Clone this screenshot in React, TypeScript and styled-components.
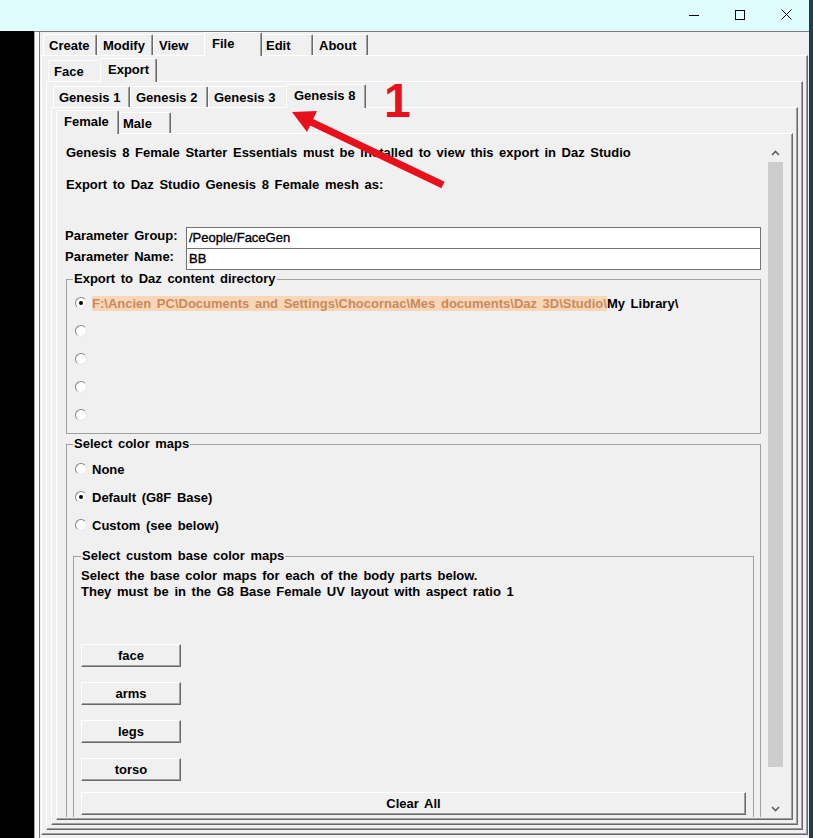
import React from "react";
import styled, { createGlobalStyle } from "styled-components";

const Global = createGlobalStyle`
  html, body { margin: 0; padding: 0; }
  body {
    width: 813px; height: 838px; overflow: hidden;
    font-family: "Liberation Sans", Arial, sans-serif;
    font-weight: 700; font-size: 13px; color: #000;
    word-spacing: 2px;
  }
  * { box-sizing: border-box; }
`;

const Screen = styled.div`
  position: relative;
  width: 813px;
  height: 838px;
  display: flex;
  overflow: hidden;
  background: #f0f0f0;
`;

const MainCol = styled.div`
  width: 809px;
  display: flex;
  flex-direction: column;
`;

const NavyStrip = styled.div`
  width: 4px;
  background: #1d3b5b;
`;

const TitleBar = styled.div`
  height: 31px;
  flex-shrink: 0;
  background: #e0fdfe;
  display: flex;
  justify-content: flex-end;
`;

const CaptionButton = styled.div`
  width: 46px;
  height: 31px;
  padding-bottom: 2px;
  display: flex;
  align-items: center;
  justify-content: center;
`;

const BodyRow = styled.div`
  flex: 1;
  display: flex;
  min-height: 0;
`;

const BlackPane = styled.div`
  width: 34px;
  background: #000;
`;

const WindowBody = styled.div`
  flex: 1;
  display: flex;
  min-width: 0;
  border-top: 1px solid #7a7a7a;
  border-left: 1px solid #a8a8a8;
  padding-left: 4px;
  background: #fcfcfc;
`;

const Client = styled.div`
  flex: 1;
  display: flex;
  flex-direction: column;
  min-width: 0;
  border-left: 1px solid #7d7d7d;
  background: #f0f0f0;
  padding: 0 1px 3px 1px;
`;

const TabControl = styled.div`
  flex: 1;
  display: flex;
  flex-direction: column;
  min-height: 0;
  min-width: 0;
`;

const TabStrip = styled.div`
  height: 23px;
  flex-shrink: 0;
  display: flex;
  align-items: flex-end;
  padding-left: 2px;
`;

const Tab = styled.div<{ $w: number; $active?: boolean }>`
  position: relative;
  z-index: ${(p) => (p.$active ? 2 : 1)};
  width: ${(p) => (p.$active ? p.$w + 4 : p.$w)}px;
  height: ${(p) => (p.$active ? 24 : 21)}px;
  margin: ${(p) => (p.$active ? "0 -2px -1px -2px" : "0")};
  padding: 0 0 ${(p) => (p.$active ? 3 : 0)}px ${(p) => (p.$active ? 7 : 5)}px;
  background: #f0f0f0;
  border-top: 1px solid #ffffff;
  border-left: 1px solid #ffffff;
  border-right: 1px solid #696969;
  box-shadow: inset -1px 0 0 #a0a0a0;
  border-radius: 2px 2px 0 0;
  display: flex;
  align-items: center;
  white-space: nowrap;
  flex-shrink: 0;
  word-spacing: 0;
`;

const Panel = styled.div`
  flex: 1;
  display: flex;
  flex-direction: column;
  min-height: 0;
  min-width: 0;
  background: #f0f0f0;
  border-top: 1px solid #ffffff;
  border-left: 1px solid #ffffff;
  border-right: 1px solid #696969;
  border-bottom: 1px solid #696969;
  box-shadow: inset -1px -1px 0 #a0a0a0;
  padding: 2px 4px 4px 4px;
`;

const ContentPanel = styled(Panel)`
  flex-direction: row;
  padding: 10px 8px 2px 3px;
`;

const Viewport = styled.div`
  flex: 1;
  min-width: 0;
  overflow: hidden;
  padding: 1px 6px 0 6px;
`;

const Note = styled.div<{ $mt?: number }>`
  line-height: 16px;
  margin-top: ${(p) => p.$mt ?? 0}px;
  white-space: nowrap;
`;

const ParamRow = styled.div<{ $mt: number }>`
  display: flex;
  margin-top: ${(p) => p.$mt}px;
`;

const ParamLabel = styled.div`
  width: 121px;
  margin-left: -1px;
  padding-top: 1px;
  line-height: 16px;
  white-space: nowrap;
`;

const ParamField = styled.div`
  flex: 1;
  height: 22px;
  background: #ffffff;
  border: 1px solid #737373;
  padding-left: 2px;
  line-height: 20px;
  font-weight: 400;
  -webkit-text-stroke: 0.35px #000;
`;

const Group = styled.fieldset<{ $mt: number; $px: number }>`
  margin: ${(p) => p.$mt}px 0 0 0;
  padding: 2px ${(p) => p.$px}px 4px;
  border: 1px solid #a0a0a0;
  min-width: 0;
`;

const GroupTop = styled(Group)`
  padding-top: 3px;
`;

const GroupInner = styled(Group)`
  padding-top: 4px;
`;

const Legend = styled.legend`
  padding: 0 1px;
  line-height: 16px;
  white-space: nowrap;
`;

const RadioRow = styled.div`
  height: 28px;
  display: flex;
  align-items: center;
  gap: 5px;
  padding-left: 2px;
  white-space: nowrap;
`;

const RadioDot = styled.span<{ $on?: boolean }>`
  width: 12px;
  height: 12px;
  flex-shrink: 0;
  border-radius: 50%;
  background: #ffffff;
  border: 1px solid;
  border-color: #858585 #e6e6e6 #e6e6e6 #858585;
  display: flex;
  align-items: center;
  justify-content: center;
  &::after {
    content: "";
    width: 4px;
    height: 4px;
    border-radius: 50%;
    background: ${(p) => (p.$on ? "#000" : "transparent")};
  }
`;

const PathHighlight = styled.span`
  background: #f9d6b8;
  color: #c98a5c;
  line-height: 15px;
`;

const PushButton = styled.div<{ $full?: boolean; $mt: number }>`
  width: ${(p) => (p.$full ? "100%" : "100px")};
  height: 23px;
  margin-top: ${(p) => p.$mt}px;
  background: #f0f0f0;
  border: 1px solid;
  border-color: #ffffff #696969 #696969 #ffffff;
  box-shadow: inset -1px -1px 0 #a0a0a0;
  display: flex;
  align-items: center;
  justify-content: center;
  padding-bottom: 1px;
`;

const ScrollBar = styled.div`
  width: 17px;
  flex-shrink: 0;
  display: flex;
  flex-direction: column;
  background: #f0f0f0;
`;

const ScrollButton = styled.div`
  height: 17px;
  flex-shrink: 0;
  display: flex;
  align-items: center;
  justify-content: center;
`;

const ScrollTrack = styled.div`
  flex: 1;
  padding: 1px 1px 0 1px;
`;

const ScrollThumb = styled.div`
  height: 605px;
  background: #cdcdcd;
`;

const Annotation = styled.svg`
  position: absolute;
  left: 0;
  top: 0;
  width: 813px;
  height: 838px;
  pointer-events: none;
`;

const StepNumber = styled.div`
  position: absolute;
  left: 384px;
  top: 77px;
  font: 700 48px/48px "Liberation Sans", Arial, sans-serif;
  color: #e8101a;
  pointer-events: none;
`;

const mainTabs = [
  { label: "Create", w: 54 },
  { label: "Modify", w: 56 },
  { label: "View", w: 53 },
  { label: "File", w: 54, active: true },
  { label: "Edit", w: 53 },
  { label: "About", w: 55 },
];
const subTabs = [
  { label: "Face", w: 54 },
  { label: "Export", w: 53, active: true },
];
const genTabs = [
  { label: "Genesis 1", w: 77 },
  { label: "Genesis 2", w: 78 },
  { label: "Genesis 3", w: 80 },
  { label: "Genesis 8", w: 76, active: true },
];
const sexTabs = [
  { label: "Female", w: 59, active: true },
  { label: "Male", w: 54 },
];

type TabDef = { label: string; w: number; active?: boolean };

const Strip = ({ tabs }: { tabs: TabDef[] }) => (
  <TabStrip>
    {tabs.map((t) => (
      <Tab key={t.label} $w={t.w} $active={t.active}>
        {t.label}
      </Tab>
    ))}
  </TabStrip>
);

const Chevron = ({ up }: { up?: boolean }) => (
  <svg width="9" height="6" viewBox="0 0 9 6">
    <polyline
      points={up ? "1,5 4.5,1.5 8,5" : "1,1 4.5,4.5 8,1"}
      fill="none"
      stroke="#606060"
      strokeWidth="1.6"
    />
  </svg>
);

export default function App() {
  return (
    <>
      <Global />
      <Screen>
        <MainCol>
          <TitleBar>
            <CaptionButton>
              <svg width="10" height="10" viewBox="0 0 10 10">
                <line x1="0" y1="5.5" x2="10" y2="5.5" stroke="#000" strokeWidth="1" />
              </svg>
            </CaptionButton>
            <CaptionButton>
              <svg width="10" height="10" viewBox="0 0 10 10">
                <rect x="0.5" y="0.5" width="9" height="9" fill="none" stroke="#000" strokeWidth="1" />
              </svg>
            </CaptionButton>
            <CaptionButton>
              <svg width="11" height="11" viewBox="0 0 11 11">
                <path d="M0.5 0.5 L10.5 10.5 M10.5 0.5 L0.5 10.5" stroke="#000" strokeWidth="1" />
              </svg>
            </CaptionButton>
          </TitleBar>
          <BodyRow>
            <BlackPane />
            <WindowBody>
              <Client>
                <TabControl>
                  <Strip tabs={mainTabs} />
                  <Panel>
                    <TabControl>
                      <Strip tabs={subTabs} />
                      <Panel>
                        <TabControl>
                          <Strip tabs={genTabs} />
                          <Panel>
                            <TabControl>
                              <Strip tabs={sexTabs} />
                              <ContentPanel>
                                <Viewport>
                                  <Note>
                                    Genesis 8 Female Starter Essentials must be installed to view this export in Daz Studio
                                  </Note>
                                  <Note $mt={16}>Export to Daz Studio Genesis 8 Female mesh as:</Note>
                                  <ParamRow $mt={34}>
                                    <ParamLabel>Parameter Group:</ParamLabel>
                                    <ParamField>/People/FaceGen</ParamField>
                                  </ParamRow>
                                  <ParamRow $mt={-1}>
                                    <ParamLabel>Parameter Name:</ParamLabel>
                                    <ParamField>BB</ParamField>
                                  </ParamRow>
                                  <Group $mt={1} $px={6}>
                                    <Legend>Export to Daz content directory</Legend>
                                    <RadioRow>
                                      <RadioDot $on />
                                      <span>
                                        <PathHighlight>
                                          F:\Ancien PC\Documents and Settings\Chocornac\Mes documents\Daz 3D\Studio\
                                        </PathHighlight>
                                        My Library\
                                      </span>
                                    </RadioRow>
                                    <RadioRow>
                                      <RadioDot />
                                    </RadioRow>
                                    <RadioRow>
                                      <RadioDot />
                                    </RadioRow>
                                    <RadioRow>
                                      <RadioDot />
                                    </RadioRow>
                                    <RadioRow>
                                      <RadioDot />
                                    </RadioRow>
                                  </Group>
                                  <GroupTop $mt={2} $px={6}>
                                    <Legend>Select color maps</Legend>
                                    <RadioRow>
                                      <RadioDot />
                                      <span>None</span>
                                    </RadioRow>
                                    <RadioRow>
                                      <RadioDot $on />
                                      <span>Default (G8F Base)</span>
                                    </RadioRow>
                                    <RadioRow>
                                      <RadioDot />
                                      <span>Custom (see below)</span>
                                    </RadioRow>
                                    <GroupInner $mt={9} $px={7}>
                                      <Legend>Select custom base color maps</Legend>
                                      <Note>Select the base color maps for each of the body parts below.</Note>
                                      <Note>They must be in the G8 Base Female UV layout with aspect ratio 1</Note>
                                      <PushButton $mt={44}>face</PushButton>
                                      <PushButton $mt={15}>arms</PushButton>
                                      <PushButton $mt={15}>legs</PushButton>
                                      <PushButton $mt={15}>torso</PushButton>
                                      <PushButton $mt={11} $full>
                                        Clear All
                                      </PushButton>
                                      <Note $mt={10}>&nbsp;</Note>
                                    </GroupInner>
                                  </GroupTop>
                                </Viewport>
                                <ScrollBar>
                                  <ScrollButton>
                                    <Chevron up />
                                  </ScrollButton>
                                  <ScrollTrack>
                                    <ScrollThumb />
                                  </ScrollTrack>
                                  <ScrollButton>
                                    <Chevron />
                                  </ScrollButton>
                                </ScrollBar>
                              </ContentPanel>
                            </TabControl>
                          </Panel>
                        </TabControl>
                      </Panel>
                    </TabControl>
                  </Panel>
                </TabControl>
              </Client>
            </WindowBody>
          </BodyRow>
        </MainCol>
        <NavyStrip />
        <Annotation viewBox="0 0 813 838">
          <line x1="443" y1="185" x2="309" y2="121" stroke="#e8101a" strokeWidth="7" />
          <polygon points="292,112 307,132 317,111" fill="#e8101a" />
        </Annotation>
        <StepNumber>1</StepNumber>
      </Screen>
    </>
  );
}
